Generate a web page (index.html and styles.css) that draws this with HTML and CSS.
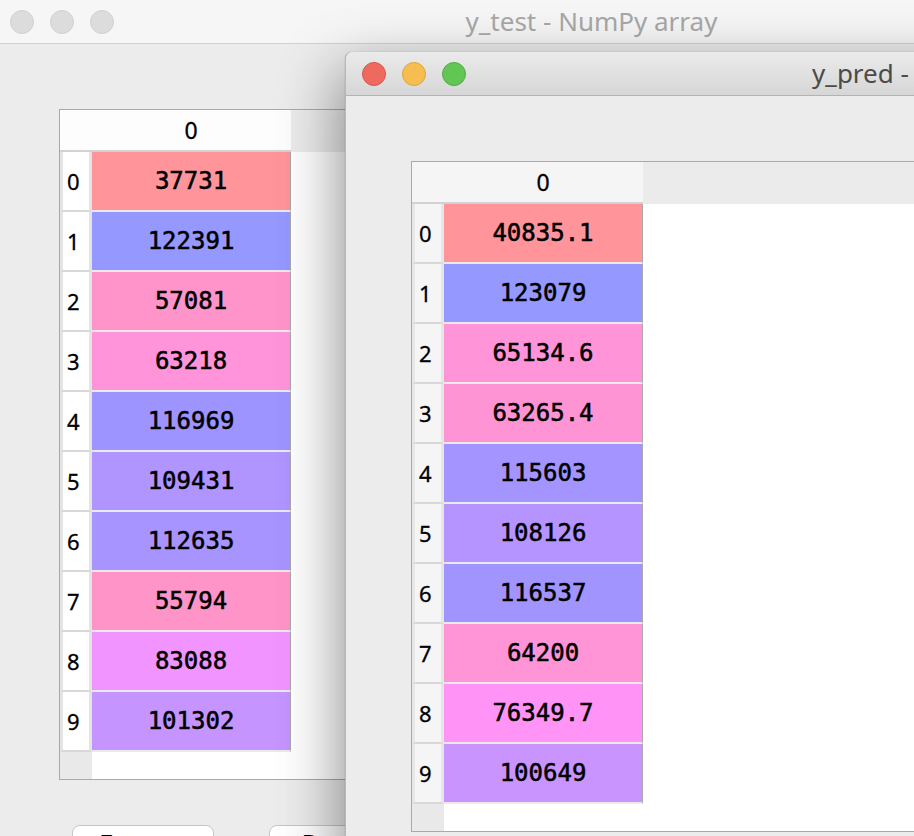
FILE: index.html
```html
<!DOCTYPE html>
<html lang="en">
<head>
<meta charset="utf-8">
<title>NumPy array</title>
<link rel="stylesheet" href="styles.css">
</head>
<body>
<div class="desk">
  <section class="win win-back">
    <header class="titlebar">
      <div class="lights"><span class="light"></span><span class="light"></span><span class="light"></span></div>
      <div class="title">y_test - NumPy array</div>
      <div></div>
    </header>
    <div class="content">
      <div class="table">
        <div class="hrow"><div class="corner"></div><div class="colhead">0</div><div class="hfill"></div></div>
        <div class="row"><div class="rh">0</div><div class="cell" style="background:#ff949a">37731</div><div class="fill"></div></div>
        <div class="row"><div class="rh">1</div><div class="cell" style="background:#9498ff">122391</div><div class="fill"></div></div>
        <div class="row"><div class="rh">2</div><div class="cell" style="background:#ff94cb">57081</div><div class="fill"></div></div>
        <div class="row"><div class="rh">3</div><div class="cell" style="background:#ff94da">63218</div><div class="fill"></div></div>
        <div class="row"><div class="rh">4</div><div class="cell" style="background:#9d94ff">116969</div><div class="fill"></div></div>
        <div class="row"><div class="rh">5</div><div class="cell" style="background:#b094ff">109431</div><div class="fill"></div></div>
        <div class="row"><div class="rh">6</div><div class="cell" style="background:#a894ff">112635</div><div class="fill"></div></div>
        <div class="row"><div class="rh">7</div><div class="cell" style="background:#ff94c8">55794</div><div class="fill"></div></div>
        <div class="row"><div class="rh">8</div><div class="cell" style="background:#f294ff">83088</div><div class="fill"></div></div>
        <div class="row"><div class="rh">9</div><div class="cell" style="background:#c594ff">101302</div><div class="fill"></div></div>
        <div class="endrow"><div class="rhend"></div><div class="fill"></div></div>
      </div>
      <div class="buttons">
        <button class="btn">Format</button>
        <button class="btn">Resize</button>
      </div>
    </div>
  </section>

  <section class="win win-front">
    <header class="titlebar">
      <div class="lights"><span class="light red"></span><span class="light yellow"></span><span class="light green"></span></div>
      <div class="title">y_pred - NumPy array</div>
      <div></div>
    </header>
    <div class="content">
      <div class="table">
        <div class="hrow"><div class="corner"></div><div class="colhead">0</div><div class="hfill"></div></div>
        <div class="row"><div class="rh">0</div><div class="cell" style="background:#ff949a">40835.1</div><div class="fill"></div></div>
        <div class="row"><div class="rh">1</div><div class="cell" style="background:#9498ff">123079</div><div class="fill"></div></div>
        <div class="row"><div class="rh">2</div><div class="cell" style="background:#ff94d9">65134.6</div><div class="fill"></div></div>
        <div class="row"><div class="rh">3</div><div class="cell" style="background:#ff94d4">63265.4</div><div class="fill"></div></div>
        <div class="row"><div class="rh">4</div><div class="cell" style="background:#a394ff">115603</div><div class="fill"></div></div>
        <div class="row"><div class="rh">5</div><div class="cell" style="background:#b694ff">108126</div><div class="fill"></div></div>
        <div class="row"><div class="rh">6</div><div class="cell" style="background:#a194ff">116537</div><div class="fill"></div></div>
        <div class="row"><div class="rh">7</div><div class="cell" style="background:#ff94d7">64200</div><div class="fill"></div></div>
        <div class="row"><div class="rh">8</div><div class="cell" style="background:#ff94f6">76349.7</div><div class="fill"></div></div>
        <div class="row"><div class="rh">9</div><div class="cell" style="background:#ca94ff">100649</div><div class="fill"></div></div>
        <div class="endrow"><div class="rhend"></div><div class="fill"></div></div>
      </div>
      <div class="buttons">
        <button class="btn">Format</button>
        <button class="btn">Resize</button>
      </div>
    </div>
  </section>
</div>
</body>
</html>
```

FILE: styles.css
```css
* { box-sizing: border-box; }
html, body { margin: 0; padding: 0; }
body {
  background: #e4e4e4;
  overflow: hidden;
  font-family: "Noto Sans", "DejaVu Sans", sans-serif;
}
.desk {
  position: relative;
  width: 914px;
  height: 836px;
  overflow: hidden;
}

/* windows */
.win {
  position: absolute;
  width: 1180px;
  height: 960px;
  background: #ececec;
  border-left: 1px solid #c9c9c9;
  border-top-left-radius: 7px;
  border-top-right-radius: 7px;
  display: flex;
  flex-direction: column;
}
.win-back { left: -7px; top: 0; }
.win-front {
  left: 345px;
  top: 52px;
  border-left-color: #b8b8b8;
  box-shadow: -6px 18px 60px rgba(0, 0, 0, 0.42), 0 0 1px rgba(0, 0, 0, 0.4);
}

/* title bar */
.titlebar {
  height: 44px;
  flex: none;
  display: grid;
  grid-template-columns: 1fr auto 1fr;
  align-items: center;
  padding-left: 16px;
  border-bottom: 1px solid #d2d2d2;
  border-top-left-radius: 7px;
  border-top-right-radius: 7px;
  background: #f6f6f6;
}
.win-front .titlebar {
  background: linear-gradient(#ebebeb, #d6d6d6);
  border-bottom-color: #b3b3b3;
}
.lights { display: flex; gap: 16px; }
.light {
  width: 24px;
  height: 24px;
  border-radius: 50%;
  background: #dcdcdc;
  border: 1px solid #d0d0d0;
}
.light.red { background: #ee6a5f; border-color: #d9544a; }
.light.yellow { background: #f6be50; border-color: #dca63c; }
.light.green { background: #62c655; border-color: #52ab44; }
.title {
  font-size: 26px;
  color: #a8a8a8;
  line-height: 30px;
  padding-bottom: 1px;
}
.win-front .title { color: #4b4b4b; }

/* content */
.content {
  padding: 65px 0 0 65px;
  display: flex;
  flex-direction: column;
}
.table {
  width: 1050px;
  border: 1px solid #a9a9a9;
  background: #ffffff;
  display: flex;
  flex-direction: column;
}
.hrow, .row, .endrow { display: flex; }
.hrow { height: 42px; }
.row { height: 60px; }
.endrow { height: 27px; }

.corner, .colhead {
  background: #fdfdfd;
  border-bottom: 2px solid #d2d2d2;
}
.win-front .corner, .win-front .colhead { background: #f5f5f5; }
.corner { width: 32px; }
.colhead {
  width: 199px;
  display: flex;
  align-items: center;
  justify-content: center;
  font-size: 23px;
  color: #000;
  padding-right: 1px;
  -webkit-text-stroke: 0.3px #000;
}
.hfill { flex: 1; background: #ececec; }
.win-front .hfill { background: #ebebeb; }

.rh {
  width: 32px;
  background: #ffffff;
  border-left: 3px solid #e4e4e4;
  border-right: 3px solid #e4e4e4;
  border-bottom: 2px solid #d8d8d8;
  display: flex;
  align-items: center;
  padding-left: 4px;
  font-size: 22px;
  color: #000;
  -webkit-text-stroke: 0.3px #000;
}
.win-front .rh { background: #f5f5f5; border-left-color: #e6e6e6; border-right-color: #e6e6e6; }
.cell {
  width: 199px;
  border-right: 1px solid #a9a9a9;
  border-bottom: 2px solid #eaeaea;
  display: flex;
  align-items: center;
  justify-content: center;
  font-family: "DejaVu Sans Mono", monospace;
  font-size: 24px;
  color: #000;
  -webkit-text-stroke: 0.55px #000;
}
.fill { flex: 1; background: #ffffff; }
.rhend { width: 32px; background: #e9e9e9; }

/* buttons */
.buttons {
  display: flex;
  gap: 55px;
  padding-left: 13px;
  margin-top: 45px;
}
.btn {
  width: 142px;
  height: 46px;
  background: #ffffff;
  border: 1px solid #c6c6c6;
  border-radius: 8px;
  font-family: "Noto Sans", sans-serif;
  font-size: 26px;
  line-height: 30px;
  color: #000;
  padding: 0 0 11px 0;
}
```
